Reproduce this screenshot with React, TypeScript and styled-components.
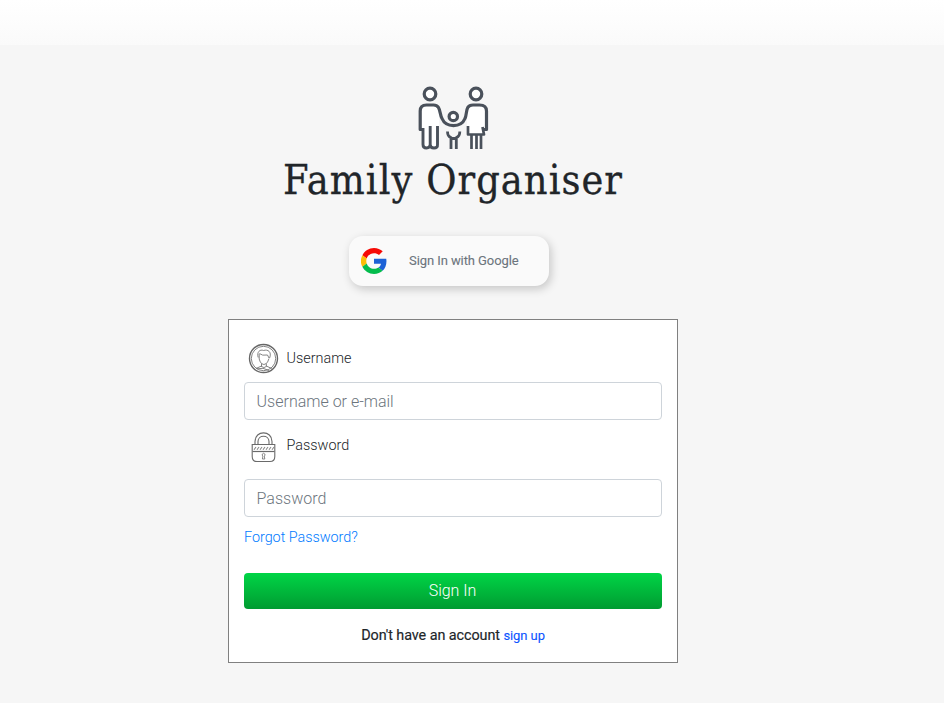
import React from "react";
import styled, { createGlobalStyle } from "styled-components";

const GlobalStyle = createGlobalStyle`
  * { box-sizing: border-box; }
  body { margin: 0; background: #f6f6f6; color: #212529; font-family: Roboto, sans-serif; font-weight: 300; }
`;

const TopBar = styled.header`
  height: 45px;
  background: linear-gradient(#ffffff, #fafafa);
`;

const Main = styled.main`
  width: 906px;
  height: 658px;
  padding-top: 40px;
  display: flex;
  flex-direction: column;
  align-items: center;
`;

const FamilyLogo = styled.svg`
  width: 72px;
  height: 66px;
  flex: none;
`;

const Title = styled.h1`
  margin: 4px 0 0;
  height: 48px;
  line-height: 51px;
  font-family: "DejaVu Serif Condensed", "DejaVu Serif", serif;
  font-stretch: condensed;
  font-size: 41px;
  font-weight: 400;
  letter-spacing: 1.05px;
  -webkit-text-stroke: 0.3px #212529;
  white-space: nowrap;
`;

const GoogleButton = styled.button`
  width: 200px;
  height: 50px;
  margin: 33px 8px 0 0;
  padding: 0 0 0 12px;
  display: flex;
  align-items: center;
  gap: 22px;
  border: 0;
  border-radius: 14px;
  background: #fafafa;
  color: #6c757d;
  font: 400 13px/16px Roboto, sans-serif;
  letter-spacing: -0.08px;
  -webkit-text-stroke: 0.1px #6c757d;
  box-shadow: 2px 3px 10px rgba(0, 0, 0, 0.2);
`;

const GoogleText = styled.span`
  padding-bottom: 0;
`;

const Form = styled.form`
  width: 450px;
  height: 344px;
  margin-top: 33px;
  padding: 23px 15px 0;
  display: flex;
  flex-direction: column;
  border: 1px solid #808080;
  background: #fff;
`;

const Label = styled.label<{ $gap: number }>`
  height: 32px;
  margin-bottom: ${(p) => p.$gap}px;
  padding-left: 4px;
  display: flex;
  align-items: center;
  gap: 7.5px;
  font-size: 14.4px;
`;

const LabelText = styled.span<{ $lift: number }>`
  padding-bottom: ${(p) => p.$lift}px;
`;

const Input = styled.input`
  width: 100%;
  height: 38px;
  flex: none;
  padding: 6px 11.6px;
  border: 1px solid #ced4da;
  border-radius: 4px;
  background: #fff;
  font: 300 16px/24px Roboto, sans-serif;
  &::placeholder { color: #6c757d; opacity: 1; }
`;

const Spacer = styled.div`
  height: 11px;
`;

const Link = styled.a<{ $bold?: boolean }>`
  color: ${(p) => (p.$bold ? "#0d55ff" : "#007bff")};
  font-size: ${(p) => (p.$bold ? "13px" : "14.4px")};
  font-weight: ${(p) => (p.$bold ? 400 : 300)};
  -webkit-text-stroke: ${(p) => (p.$bold ? "0.1px #0d55ff" : "0")};
  text-decoration: none;
`;

const ForgotRow = styled.div`
  height: 24px;
  margin: 9px 0 23px;
  line-height: 24px;
  font-size: 14.4px;
  letter-spacing: -0.03px;
`;

const Submit = styled.button`
  height: 36px;
  flex: none;
  padding: 0 7px 0 6px;
  border: 0;
  border-radius: 4px;
  background: linear-gradient(#00d546, #009b31);
  color: #fff;
  font: 300 16px/24px Roboto, sans-serif;
`;

const SignUpRow = styled.p`
  margin: 15px 0 0;
  line-height: 24px;
  text-align: center;
  font-size: 14.4px;
  font-weight: 400;
  letter-spacing: -0.08px;
  -webkit-text-stroke: 0.15px #212529;
`;

function Family() {
  return (
    <FamilyLogo viewBox="0 0 72 66" fill="#fff" stroke="#4a515b" strokeWidth="3.2" strokeLinejoin="round">
      <circle cx="13" cy="9" r="5.8" />
      <circle cx="59" cy="9" r="5.8" />
      <path stroke="none" d="M5 41V26Q5 20 11 20H16Q22 20 22 26V62H5ZM50 28Q50 20 56 20H63Q68 20 68 26V41L66 48H64V63H53V48H50Z" />
      <path fill="none" d="M6 44.500H3.200V26Q3.200 20 9.500 20H16.500C24 20 22 28 25 33.500C29 43 44 43 48 33.500C50.500 28 48 20 56 20H62.500Q69.500 20 69.500 26V44.500H66.200" />
      <path fill="none" strokeWidth="2.900" d="M6 43V59.500Q6 63 9.500 63T13.200 59.500V41M13.200 59.500Q13.200 63 17 63T20.500 59.500V41" />
      <path fill="none" strokeWidth="2.700" d="M51 41V49.500H67L65.500 42M54.500 50V64M59.500 50V64M64 50V64" />
      <circle cx="36.300" cy="31.500" r="4.200" strokeWidth="3.200" />
      <path fill="none" strokeWidth="2.800" d="M30.500 46.500Q30.500 51.500 34 52.500V64M42.800 46.500Q42.800 51.500 39.300 52.500V64M33 53.500H40" />
    </FamilyLogo>
  );
}

function Google() {
  return (
    <svg width="26" height="26" viewBox="0 0 48 48">
      <path fill="#f60a05" d="M24 9.500c3.500 0 6.700 1.200 9.200 3.600l6.900-6.900C35.900 2.400 30.500 0 24 0 14.600 0 6.500 5.400 2.600 13.200l8 6.200C12.400 13.700 17.700 9.500 24 9.500z" />
      <path fill="#1d62d6" d="M47 24.500c0-1.600-.2-3.100-.4-4.500H24v9h12.900c-.6 3-2.200 5.500-4.800 7.200l7.800 6C44.400 38 47 31.900 47 24.500z" />
      <path fill="#fcbd06" d="M10.500 28.600A14.500 14.500 0 0 1 10.500 19.400l-8-6.200a24 24 0 0 0 0 21.600z" />
      <path fill="#04bc4d" d="M24 48c6.500 0 11.900-2.100 15.900-5.800l-7.800-6c-2.100 1.500-4.900 2.300-8.100 2.300-6.300 0-11.600-4.200-13.500-9.900l-8 6.200C6.500 42.600 14.600 48 24 48z" />
    </svg>
  );
}

function UserIcon() {
  return (
    <svg width="31" height="32" viewBox="0 0 31 32" fill="none" stroke="#666" strokeWidth=".8">
      <circle cx="15.500" cy="15.500" r="14" strokeWidth="1.400" />
      <circle cx="15.500" cy="15.500" r="12.200" />
      <path d="M10.200 14.500C8.500 9 12 6 15.500 7.500C20 6 24 9 21.600 15M11.400 10.500Q14 13 19.500 12L21 15M11.200 11V16L12.300 19Q15.800 24 19.600 19L21 15.500M13.500 20.500V23L8 25.500M18.300 20.500V23L23.700 25.500M13 23.200Q16 26 18.800 23.200M9 25.800Q15 24 21 27.500" />
    </svg>
  );
}

function LockIcon() {
  return (
    <svg width="31" height="32" viewBox="0 0 31 32" fill="none" stroke="#6a6a6a" strokeWidth="1.100">
      <path d="M7 14V10.500C7 -1 24 -1 24 10.500V14M10 14V10.500C10 3.500 21 3.500 21 10.500V14" />
      <path d="M4.200 13.500H26.800V25.500Q26.800 30.500 22 30.500H9Q4.200 30.500 4.200 25.500Z" />
      <path strokeWidth="1.200" d="M4.500 20.500H26.500" />
      <path stroke="#888" d="M6 18.800L8 16M9 18.800L11 16M12 18.800L14 16M15 18.800L17 16M18 18.800L20 16M21 18.800L23 16M24 18.800L26 16" />
      <path strokeWidth=".8" d="M14.900 25L14.400 28H16.800L16.300 25A1.400 1.400 0 1 0 14.900 25Z" />
    </svg>
  );
}

export default function App() {
  return (
    <>
      <GlobalStyle />
      <TopBar />
      <Main>
        <Family />
        <Title>Family Organiser</Title>
        <GoogleButton type="button"><Google /><GoogleText>Sign In with Google</GoogleText></GoogleButton>
        <Form>
          <Label htmlFor="username" $gap={7}><UserIcon /><LabelText $lift={2}>Username</LabelText></Label>
          <Input id="username" placeholder="Username or e-mail" />
          <Spacer />
          <Label htmlFor="password" $gap={16}><LockIcon /><LabelText $lift={4}>Password</LabelText></Label>
          <Input id="password" type="password" placeholder="Password" />
          <ForgotRow><Link href="#">Forgot Password?</Link></ForgotRow>
          <Submit type="button">Sign In</Submit>
          <SignUpRow>Don't have an account <Link href="#" $bold>sign up</Link></SignUpRow>
        </Form>
      </Main>
    </>
  );
}
